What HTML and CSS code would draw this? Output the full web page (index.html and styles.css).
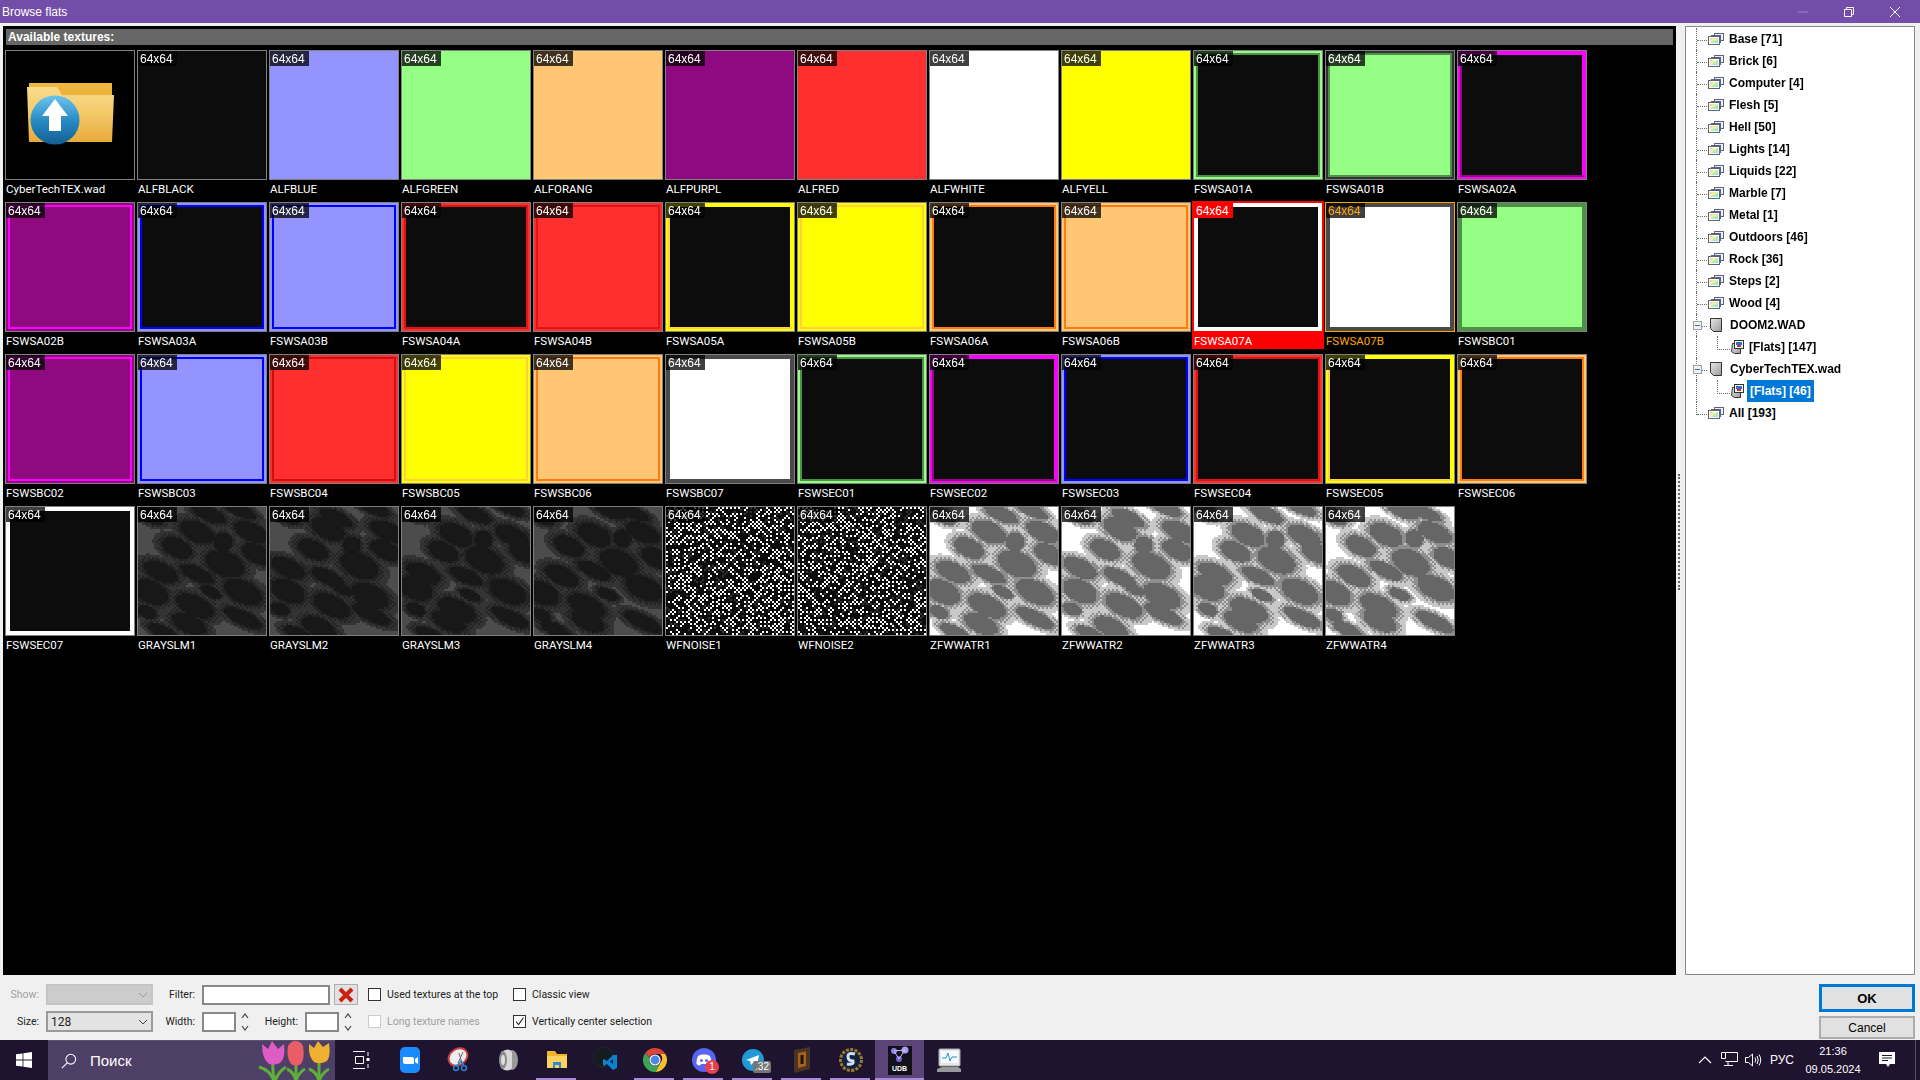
FILE: index.html
```html
<!DOCTYPE html>
<html lang="en">
<head>
    <meta charset="UTF-8">
    <title>Browse flats</title>
    <link rel="stylesheet" href="styles.css">
</head>
<body>

    <svg class="defs" width="0" height="0">
        <defs>
            <linearGradient id="pastel" x1="0" y1="0" x2="1" y2="1">
                <stop offset="0" stop-color="#ffb0b0"/>
                <stop offset="0.35" stop-color="#fff2a0"/>
                <stop offset="0.65" stop-color="#a8f0b0"/>
                <stop offset="1" stop-color="#9fd0ff"/>
            </linearGradient>
            <linearGradient id="page" x1="0" y1="0" x2="1" y2="1">
                <stop offset="0" stop-color="#e8e8e8"/>
                <stop offset="1" stop-color="#9a9a9a"/>
            </linearGradient>
            <linearGradient id="folderFront" x1="0" y1="0" x2="0" y2="1">
                <stop offset="0" stop-color="#f8dc8c"/>
                <stop offset="0.5" stop-color="#f3c968"/>
                <stop offset="1" stop-color="#e9a93a"/>
            </linearGradient>
            <linearGradient id="folderBack" x1="0" y1="0" x2="0" y2="1">
                <stop offset="0" stop-color="#f0b840"/>
                <stop offset="1" stop-color="#d99a20"/>
            </linearGradient>
            <linearGradient id="orb" x1="0" y1="0" x2="0" y2="1">
                <stop offset="0" stop-color="#6cc4ee"/>
                <stop offset="0.5" stop-color="#2a8cc4"/>
                <stop offset="1" stop-color="#125f94"/>
            </linearGradient>
            <symbol id="ico-stack" viewBox="0 0 16 12">
                <rect x="6.5" y="0.5" width="9" height="7" fill="#eef2f8" stroke="#59647c"/>
                <rect x="3.5" y="2.5" width="9" height="7" fill="#eef2f8" stroke="#59647c"/>
                <rect x="0.5" y="3.5" width="11" height="8" fill="#fff" stroke="#59647c"/>
                <rect x="2" y="5" width="8" height="5" fill="url(#pastel)"/>
            </symbol>
            <symbol id="ico-doc" viewBox="0 0 12 15">
                <path d="M3.5 .5h8v13h-8l-3-3v-10z" fill="url(#page)" stroke="#333"/>
            </symbol>
            <symbol id="ico-flat" viewBox="0 0 15 15">
                <path d="M3.5 3.5h8v10h-6l-3-2z" fill="url(#page)" stroke="#333"/>
                <rect x="5.5" y="0.5" width="9" height="8" fill="#fff" stroke="#333"/>
                <rect x="7" y="2" width="6" height="3" fill="#2f6fd0"/>
                <rect x="8" y="5" width="4" height="2" fill="#d03030"/>
            </symbol>
            <symbol id="ico-chev" viewBox="0 0 10 6">
                <path d="M1 1l4 4 4-4" fill="none" stroke="currentColor"/>
            </symbol>
            <symbol id="ico-up" viewBox="0 0 8 6">
                <path d="M1 5l3-4 3 4" fill="none" stroke="#444" stroke-width="1.2"/>
            </symbol>
            <symbol id="ico-down" viewBox="0 0 8 6">
                <path d="M1 1l3 4 3-4" fill="none" stroke="#444" stroke-width="1.2"/>
            </symbol>
            <symbol id="ico-folder" viewBox="0 0 88 62">
                <path d="M3 0h83v56H3z" fill="url(#folderBack)"/>
                <path d="M1 4h30l5 8h52l-2 47H3z" fill="url(#folderFront)"/>
                <circle cx="29" cy="37" r="24.5" fill="url(#orb)"/>
                <path d="M29 16l13 17h-7v15H23V33h-7z" fill="#fff"/>
            </symbol>
        </defs>
    </svg>

    <header class="titlebar">
        <span class="title-text">Browse flats</span>
        <div class="caption">
            <span class="caption-btn">
                <svg width="10" height="10" viewBox="0 0 10 10"><path d="M0 5h10" stroke="#9d83c7"/></svg>
            </span>
            <span class="caption-btn">
                <svg width="10" height="10" viewBox="0 0 10 10"><path d="M.5 2.5h7v7h-7zM2.5 2.5v-2h7v7h-2" fill="none" stroke="#fff"/></svg>
            </span>
            <span class="caption-btn">
                <svg width="10" height="10" viewBox="0 0 10 10"><path d="M0 0l10 10M10 0L0 10" stroke="#fff"/></svg>
            </span>
        </div>
    </header>

    <div class="window">
        <div class="panes">
            <section class="browser">
                <div class="browser-head">Available textures:</div>
                <div class="tiles" id="tiles"></div>
            </section>

            <div class="splitter"><span class="grip"></span></div>

            <nav class="tree">
                <div class="node"><svg class="i-stack"><use href="#ico-stack"/></svg><span class="node-text">Base [71]</span></div>
                <div class="node"><svg class="i-stack"><use href="#ico-stack"/></svg><span class="node-text">Brick [6]</span></div>
                <div class="node"><svg class="i-stack"><use href="#ico-stack"/></svg><span class="node-text">Computer [4]</span></div>
                <div class="node"><svg class="i-stack"><use href="#ico-stack"/></svg><span class="node-text">Flesh [5]</span></div>
                <div class="node"><svg class="i-stack"><use href="#ico-stack"/></svg><span class="node-text">Hell [50]</span></div>
                <div class="node"><svg class="i-stack"><use href="#ico-stack"/></svg><span class="node-text">Lights [14]</span></div>
                <div class="node"><svg class="i-stack"><use href="#ico-stack"/></svg><span class="node-text">Liquids [22]</span></div>
                <div class="node"><svg class="i-stack"><use href="#ico-stack"/></svg><span class="node-text">Marble [7]</span></div>
                <div class="node"><svg class="i-stack"><use href="#ico-stack"/></svg><span class="node-text">Metal [1]</span></div>
                <div class="node"><svg class="i-stack"><use href="#ico-stack"/></svg><span class="node-text">Outdoors [46]</span></div>
                <div class="node"><svg class="i-stack"><use href="#ico-stack"/></svg><span class="node-text">Rock [36]</span></div>
                <div class="node"><svg class="i-stack"><use href="#ico-stack"/></svg><span class="node-text">Steps [2]</span></div>
                <div class="node"><svg class="i-stack"><use href="#ico-stack"/></svg><span class="node-text">Wood [4]</span></div>
                <div class="node node-wad"><span class="expander"></span><svg class="i-doc"><use href="#ico-doc"/></svg><span class="node-text">DOOM2.WAD</span></div>
                <div class="node node-child"><svg class="i-flat"><use href="#ico-flat"/></svg><span class="node-text">[Flats] [147]</span></div>
                <div class="node node-wad"><span class="expander"></span><svg class="i-doc"><use href="#ico-doc"/></svg><span class="node-text">CyberTechTEX.wad</span></div>
                <div class="node node-child"><svg class="i-flat"><use href="#ico-flat"/></svg><span class="node-text node-selected">[Flats] [46]</span></div>
                <div class="node node-last"><svg class="i-stack"><use href="#ico-stack"/></svg><span class="node-text">All [193]</span></div>
            </nav>
        </div>

        <footer class="bottom">
            <div class="controls">
                <span class="lbl lbl-off">Show:</span>
                <div class="combo combo-off"><svg class="chev"><use href="#ico-chev"/></svg></div>
                <span class="lbl">Filter:</span>
                <div class="inline-row">
                    <input class="field field-filter" type="text">
                    <span class="clear-btn">
                        <svg width="16" height="16" viewBox="0 0 16 16"><path d="M2 2l12 12M14 2L2 14" stroke="#c9230f" stroke-width="4"/></svg>
                    </span>
                </div>
                <label class="check"><span class="box"></span>Used textures at the top</label>
                <label class="check"><span class="box"></span>Classic view</label>

                <span class="lbl">Size:</span>
                <div class="combo">128<svg class="chev"><use href="#ico-chev"/></svg></div>
                <span class="lbl">Width:</span>
                <div class="inline-row">
                    <input class="field field-num" type="text">
                    <span class="spin"><svg><use href="#ico-up"/></svg><svg><use href="#ico-down"/></svg></span>
                    <span class="lbl lbl-height">Height:</span>
                    <input class="field field-num" type="text">
                    <span class="spin"><svg><use href="#ico-up"/></svg><svg><use href="#ico-down"/></svg></span>
                </div>
                <label class="check check-off"><span class="box"></span>Long texture names</label>
                <label class="check">
                    <span class="box">
                        <svg width="11" height="11" viewBox="0 0 11 11"><path d="M2 5.5l2.5 3L9.5 1.5" fill="none" stroke="#222" stroke-width="1.1"/></svg>
                    </span>Vertically center selection
                </label>
            </div>
            <div class="actions">
                <button class="btn btn-ok" type="button">OK</button>
                <button class="btn btn-cancel" type="button">Cancel</button>
            </div>
        </footer>
    </div>

    <div class="taskbar">
        <div class="start">
            <svg width="16" height="16" viewBox="0 0 16 16"><path d="M0 2.3l6.6-.9v6.2H0zM7.4 1.3L16 0v7.6H7.4zM0 8.4h6.6v6.2L0 13.7zM7.4 8.4H16V16l-8.6-1.2z" fill="#fff"/></svg>
        </div>
        <div class="search">
            <svg width="16" height="16" viewBox="0 0 18 18"><circle cx="11" cy="7" r="5.5" fill="none" stroke="#fff" stroke-width="1.2"/><path d="M7 11l-6 6" stroke="#fff" stroke-width="1.2"/></svg>
            <span class="search-text">Поиск</span>
            <svg class="tulips" width="76" height="40" viewBox="0 0 76 40">
                <g fill="none" stroke="#5fae3a" stroke-width="3">
                    <path d="M16 20q-1 12 2 20M2 26q11 3 15 14M29 26q-8 5-11 14"/>
                    <path d="M39 22v18M30 28q7 3 9 12M48 28q-7 4-9 12"/>
                    <path d="M62 20v20M52 28q8 3 10 12M72 28q-7 4-10 12"/>
                </g>
                <path d="M5 3l6 5 4-8 6 8 6-5q2 14-4 19-6 3-11 1Q5 18 5 3z" fill="#de5cc4"/>
                <path d="M31 5q3-5 7-5 6 0 8 5 2 12-2 18-5 3-10 0-5-7-3-18z" fill="#ec5c66"/>
                <path d="M52 3l5 4 4-7 5 6 6-4q2 13-2 18-7 4-13 1-6-6-5-18z" fill="#eeb030"/>
            </svg>
        </div>
        <div class="apps">
            <span class="app">
                <svg width="18" height="18" viewBox="0 0 18 18"><path d="M1 .5h12M1 17.5h12M3.5 5.5h8v7h-8zM16 1v4M16 13v4" fill="none" stroke="#fff"/><rect x="14.5" y="7" width="3" height="3" fill="#fff"/></svg>
            </span>
            <span class="app">
                <svg width="20" height="26" viewBox="0 0 20 26"><rect width="20" height="26" rx="5" fill="#1a8cff"/><path d="M3 10h9q2 0 2 2v5H5q-2 0-2-2zM15 12l3-2v7l-3-2z" fill="#fff"/></svg>
            </span>
            <span class="app">
                <svg width="24" height="26" viewBox="0 0 24 26"><ellipse cx="11" cy="10" rx="10" ry="8" transform="rotate(-35 11 10)" fill="#eee" stroke="#c94040" stroke-width="2"/><path d="M12 6l3 10M16 5l-5 11" stroke="#666"/><circle cx="9" cy="21" r="2.5" fill="none" stroke="#2a80d0" stroke-width="1.5"/><circle cx="17" cy="21" r="2.5" fill="none" stroke="#2a80d0" stroke-width="1.5"/><path d="M10 19l4-5 3 5" fill="none" stroke="#2a80d0" stroke-width="1.5"/></svg>
            </span>
            <span class="app">
                <svg width="20" height="26" viewBox="0 0 20 26"><ellipse cx="14" cy="13" rx="6" ry="10" fill="#9a9a9a"/><path d="M3 5q8-5 11 0v16q-4 5-11 0z" fill="#d8d8d8"/><ellipse cx="5" cy="13" rx="4" ry="9" fill="#8c8c8c"/><ellipse cx="5" cy="13" rx="2" ry="5" fill="#ddd"/></svg>
            </span>
            <span class="app app-run">
                <svg width="22" height="22" viewBox="0 0 22 22"><path d="M1 2h8l2 3h10v14H1z" fill="#f2b52c"/><path d="M1 7h20v12H1z" fill="#fbd25e"/><path d="M7 19v-6h8v6h-2v-3H9v3z" fill="#2a8ad4"/></svg>
            </span>
            <span class="app">
                <svg width="26" height="28" viewBox="0 0 26 28"><circle cx="10" cy="11" r="10" fill="#141c20" stroke="#20282c"/><path d="M24 9v13l-4 2-6-6-3 2-1-1v-5l1-1 3 2 6-6zM20 13l-3 2.5 3 2.5z" fill="#0b83d4"/></svg>
            </span>
            <span class="app app-run">
                <svg width="24" height="24" viewBox="0 0 24 24"><path d="M12 0a12 12 0 0 1 10.4 6H12a6 6 0 0 0-5.6 3.8L2.3 5A12 12 0 0 1 12 0z" fill="#db4437"/><path d="M22.4 6A12 12 0 0 1 12.5 24l4.7-9a6 6 0 0 0 0-9z" fill="#fbc02d"/><path d="M2.3 5a12 12 0 0 0 10.2 19l4.7-9a6 6 0 0 1-10.800-5z" fill="#3aa655"/><circle cx="12" cy="12" r="5.6" fill="#fff"/><circle cx="12" cy="12" r="4.4" fill="#4a86e8"/></svg>
            </span>
            <span class="app app-run">
                <svg width="24" height="24" viewBox="0 0 24 24"><circle cx="12" cy="12" r="12" fill="#5865f2"/><path d="M6 8q3-2 4-1.5h4Q15 6 18 8q2 4 1.500 8-2 1.500-3.500 1.500l-1-1.500h-6l-1 1.500Q6.500 17.500 4.500 16 4 12 6 8z" fill="#fff"/><circle cx="9.5" cy="12.5" r="1.5" fill="#5865f2"/><circle cx="14.5" cy="12.5" r="1.5" fill="#5865f2"/></svg>
                <span class="badge badge-red">1</span>
            </span>
            <span class="app app-run">
                <svg width="24" height="24" viewBox="0 0 24 24"><circle cx="12" cy="12" r="11" fill="#1f9ad6"/><path d="M5 12l13-5-2 11-4-3-2 2-1-4z" fill="#fff"/></svg>
                <span class="badge badge-gray">.32</span>
            </span>
            <span class="app app-run">
                <svg width="20" height="28" viewBox="0 0 20 28"><path d="M2 4l16-3v22L2 27z" fill="#4a3524"/><path d="M6 7l8-1.5V20l-8 2z" fill="#a8601c"/><path d="M8.5 9h3v9h-3z" fill="#1e150d"/></svg>
            </span>
            <span class="app app-run">
                <svg width="24" height="26" viewBox="0 0 24 26"><circle cx="12" cy="13" r="10.5" fill="#15233a" stroke="#9a7a30" stroke-width="3" stroke-dasharray="3 1.4"/><path d="M16 7q-7-2-7 2.5t5 4.5q1 4-6 3" fill="none" stroke="#cfe0f4" stroke-width="3"/></svg>
            </span>
            <span class="app app-active">
                <span class="udb">
                    <svg width="24" height="18" viewBox="0 0 24 18"><circle cx="6" cy="5" r="3" fill="#8a7cf0"/><circle cx="17" cy="4" r="3.5" fill="#a99cf6"/><circle cx="11" cy="13" r="3" fill="#6f60d8"/><path d="M6 5l11-1-6 9z" fill="none" stroke="#c8c0ff"/></svg>
                    <span class="udb-text">UDB</span>
                </span>
            </span>
            <span class="app">
                <svg width="26" height="26" viewBox="0 0 26 26"><path d="M1 22l5-2h16l3 2v3H1z" fill="#999"/><rect x="3" y="2" width="21" height="17" rx="1" fill="#e6e6e6" stroke="#aaa"/><rect x="5" y="4" width="17" height="12" fill="#f6fbff"/><path d="M6 11h4l2-5 2 8 2-4h5" fill="none" stroke="#2e8fc9"/></svg>
            </span>
        </div>

        <div class="tray">
            <svg width="14" height="8" viewBox="0 0 14 8"><path d="M1 7l6-6 6 6" fill="none" stroke="#fff" stroke-width="1.2"/></svg>
            <svg class="tray-net" width="17" height="16" viewBox="0 0 17 16"><path d="M4.5.5h12v9h-12M7 9.5V13M3 13.5h9M.5.5h4v6h-4z" fill="none" stroke="#fff"/></svg>
            <svg class="tray-vol" width="17" height="14" viewBox="0 0 17 14"><path d="M.5 4.5h3l4-3.500v12l-4-3.500h-3z" fill="none" stroke="#fff"/><path d="M10 4.5q1.500 2.500 0 5M12 3q2.500 4 0 8M14 1.500q3.500 5.500 0 11" fill="none" stroke="#fff"/></svg>
            <span class="tray-lang">РУС</span>
            <span class="clock"><span>21:36</span><span>09.05.2024</span></span>
            <svg class="tray-msg" width="16" height="16" viewBox="0 0 16 16"><path d="M0 0h16v12h-5l-2 3-2-3H0z" fill="#fff"/><path d="M3 3.5h10M3 6h10M3 8.5h6" stroke="#1f1430"/></svg>
            <span class="show-desktop"></span>
        </div>
    </div>

    <script src="script.js"></script>
</body>
</html>
```

FILE: styles.css
```css
* { box-sizing: border-box; }
html, body { margin: 0; height: 100%; }
body { display: flex; flex-direction: column; height: 1080px; overflow: hidden; background: #f0f0f0; font-family: "Liberation Sans", Arial, sans-serif; font-size: 12px; color: #000; }
.defs { position: absolute; }

/* title bar */
.titlebar { display: flex; align-items: center; justify-content: space-between; height: 23px; flex: none; padding-left: 2px; background: #744da9; color: #fff; }
.caption { display: flex; margin-right: 2px; }
.caption-btn { display: flex; width: 46px; height: 23px; align-items: center; justify-content: center; }

/* main window */
.window { display: flex; flex-direction: column; flex: 1; min-height: 0; }
.panes { display: flex; flex: 1; min-height: 0; padding: 3px 5px 0 3px; }
.browser { flex: 1; min-width: 0; padding-top: 3px; background: #000; color: #fff; }
.browser-head { height: 16px; margin: 0 3px; padding-left: 2px; line-height: 17px; background: #666; font-weight: bold; }
.tiles { display: grid; grid-template-columns: repeat(12, 132px); row-gap: 4px; padding: 4px 0 0 1px; }
.tile { height: 148px; padding: 1px; }
.thumb { position: relative; width: 130px; height: 130px; border: 1px solid #808080; background: #000; }
.thumb canvas { display: block; width: 128px; height: 128px; image-rendering: pixelated; }
.thumb-folder { display: flex; align-items: center; justify-content: center; padding-bottom: 2px; }
.dims { position: absolute; top: 0; left: 0; width: 39px; height: 15px; padding-left: 2px; line-height: 16px; background: rgba(0, 0, 0, 0.75); }
.tile-name { height: 17px; padding-left: 1px; font-family: Roboto, "Liberation Sans", sans-serif; font-size: 11.5px; line-height: 18px; white-space: nowrap; }
.tile-selected { background: #f00; }
.tile-selected .thumb { border-color: #f00; }
.tile-selected .dims { background: #f00; }
.tile-hover .thumb { border-color: #ffa500; }
.tile-hover .dims, .tile-hover .tile-name { color: #ffa500; }

.splitter { display: flex; flex: none; width: 9px; align-items: center; padding-left: 2px; }
.grip { width: 2px; height: 116px; margin-top: 62px; border-left: 2px dotted #666; }

/* tree */
.tree { flex: none; width: 230px; padding-top: 1px; background: #fff; border: 1px solid #828790; }
.node { position: relative; display: flex; height: 22px; align-items: center; padding-left: 22px; font-weight: bold; }
.node::before { content: ""; position: absolute; left: 10px; top: 0; bottom: 0; border-left: 1px dotted #666; }
.node::after { content: ""; position: absolute; left: 11px; top: 12px; width: 10px; border-top: 1px dotted #666; }
.node-last::before { bottom: 9px; }
.node-text { padding: 0 3px; line-height: 22px; white-space: nowrap; }
.i-stack { width: 16px; height: 12px; margin-right: 2px; }
.i-doc { width: 12px; height: 15px; margin: 0 5px 0 2px; }
.i-flat { width: 15px; height: 15px; margin-right: 2px; }
.node-wad { z-index: 1; }
.expander { position: absolute; left: 7px; top: 7px; z-index: 1; width: 9px; height: 9px; background: linear-gradient(#3a6ea5, #3a6ea5) center / 5px 1px no-repeat, #f2f2f2; border: 1px solid #a0a0a0; }
.node-child { padding-left: 43px; }
.node-child .i-flat { position: relative; }
.node-child::after { left: 31px; top: 0; width: 12px; height: 13px; border-top: 0; border-left: 1px dotted #666; border-bottom: 1px dotted #666; }
.node-selected { margin-left: 1px; color: #fff; background: #0078d7; }

/* bottom controls */
.bottom { display: flex; flex: none; height: 65px; justify-content: space-between; padding: 9px 5px 0 0; }
.controls { display: grid; grid-template-columns: 46px 107px 49px 166px 145px auto; grid-template-rows: 21px 21px; row-gap: 6px; align-items: center; color: #222; font-family: Roboto, "Liberation Sans", sans-serif; font-size: 10.5px; }
.lbl { justify-self: end; padding-right: 7px; }
.lbl-off { color: #a0a0a0; }
.lbl-height { width: 54px; text-align: right; }
.combo { position: relative; height: 21px; padding-left: 3px; line-height: 18px; font-size: 12px; background: #e3e3e3; border: 2px solid #9a9a9a; }
.combo-off { background: #ccc; border-color: #c4c4c4; color: #888; }
.chev { position: absolute; top: 6px; right: 3px; width: 10px; height: 6px; color: #444; }
.combo-off .chev { color: #9a9a9a; }
.inline-row { display: flex; align-items: center; }
.field { height: 20px; padding: 0; background: #fff; border: 2px solid #888; }
.field-filter { width: 128px; margin-right: 4px; }
.field-num { width: 34px; }
.clear-btn { display: flex; width: 24px; height: 21px; align-items: center; justify-content: center; background: #e1e1e1; border: 1px solid #adadad; }
.spin { display: flex; flex-direction: column; gap: 6px; width: 10px; margin-left: 5px; }
.spin svg { width: 8px; height: 6px; }
.check { display: flex; align-items: center; gap: 6px; white-space: nowrap; }
.box { display: flex; width: 13px; height: 13px; flex: none; align-items: center; justify-content: center; background: #fff; border: 1px solid #333; }
.check-off { color: #a0a0a0; }
.check-off .box { border-color: #ccc; }
.actions { display: flex; flex-direction: column; gap: 4px; width: 96px; }
.btn { padding: 0; font-family: inherit; background: #e1e1e1; cursor: pointer; }
.btn-ok { height: 28px; font-size: 13px; font-weight: bold; border: 3px solid #0078d7; }
.btn-cancel { height: 23px; font-size: 12px; border: 2px solid #adadad; }

/* taskbar */
.taskbar { display: flex; flex: none; height: 40px; background: #1f1430; color: #fff; }
.start { display: flex; width: 48px; align-items: center; justify-content: center; }
.search { position: relative; display: flex; width: 287px; align-items: center; gap: 13px; padding-left: 13px; background: #4d3f66; border-top: 1px solid #5d4f76; }
.search-text { font-size: 15px; }
.tulips { position: absolute; right: 2px; top: 0; }
.apps { display: flex; margin-left: 1px; }
.app { position: relative; display: flex; width: 49px; height: 40px; align-items: center; justify-content: center; }
.app-run::after { content: ""; position: absolute; left: 4px; right: 5px; bottom: 0; height: 2px; background: #a98ad8; }
.app-active { background: #5b4476; }
.app-active::after { content: ""; position: absolute; left: 0; right: 0; bottom: 0; height: 2px; background: #a98ad8; }
.badge { position: absolute; font-size: 10px; line-height: 14px; text-align: center; color: #fff; }
.badge-red { right: 9px; bottom: 6px; width: 14px; height: 14px; border-radius: 50%; background: #e8404a; }
.badge-gray { right: 6px; bottom: 7px; width: 18px; height: 12px; line-height: 12px; border-radius: 2px; background: #777; }
.udb { display: flex; flex-direction: column; width: 24px; height: 29px; align-items: center; background: #121018; }
.udb-text { font-size: 7px; line-height: 9px; font-weight: bold; }
.tray { display: flex; align-items: center; margin-left: auto; }
.tray-net { margin-left: 9px; }
.tray-vol { margin-left: 7px; }
.tray-lang { margin-left: 8px; width: 24px; }
.clock { display: flex; flex-direction: column; align-items: center; gap: 5px; width: 56px; margin-left: 11px; font-size: 11px; line-height: 13px; }
.tray-msg { margin: 0 20px 0 18px; }
.show-desktop { align-self: stretch; width: 5px; border-left: 1px solid #554a66; }
```

FILE: script.js
```js
// --- Texture data: name, fill, outer ring, inner ring top/right, inner ring bottom/left ---
const K = '#0c0c0c', B = '#9494ff', G = '#94ff84', O = '#ffc773', P = '#8f0a80', R = '#ff2f2f', W = '#ffffff', Y = '#ffff00';
const DG = '#4f8f47', MG = '#ff00ff', BL = '#0000ff', DR = '#dd1515', GD = '#ffd040', OR = '#ff7a10', GR = '#4a4a4a';

const flats = [
    ['ALFBLACK', K], ['ALFBLUE', B], ['ALFGREEN', G], ['ALFORANG', O], ['ALFPURPL', P], ['ALFRED', R], ['ALFWHITE', W], ['ALFYELL', Y],
    ['FSWSA01A', K, G, DG, DG], ['FSWSA01B', G, '#333333', DG, DG], ['FSWSA02A', K, MG, MG, P],
    ['FSWSA02B', P, P, MG, MG], ['FSWSA03A', K, B, BL, BL], ['FSWSA03B', B, B, BL, BL], ['FSWSA04A', K, R, DR, DR], ['FSWSA04B', R, R, DR, DR],
    ['FSWSA05A', K, Y, Y, GD], ['FSWSA05B', Y, Y, GD, GD], ['FSWSA06A', K, O, OR, OR], ['FSWSA06B', O, O, OR, OR],
    ['FSWSA07A', K, W, W, W], ['FSWSA07B', W, GR, GR, GR], ['FSWSBC01', G, DG, DG, DG],
    ['FSWSBC02', P, P, MG, MG], ['FSWSBC03', B, B, BL, BL], ['FSWSBC04', R, R, '#cc1010', '#cc1010'], ['FSWSBC05', Y, Y, GD, GD], ['FSWSBC06', O, O, OR, OR], ['FSWSBC07', W, GR, GR, GR],
    ['FSWSEC01', K, G, DG, DG], ['FSWSEC02', K, MG, MG, P], ['FSWSEC03', K, B, BL, BL], ['FSWSEC04', K, R, DR, DR], ['FSWSEC05', K, Y, Y, GD], ['FSWSEC06', K, O, OR, OR],
    ['FSWSEC07', K, W, W, W],
    ['GRAYSLM1', 'slime', 0], ['GRAYSLM2', 'slime', 1], ['GRAYSLM3', 'slime', 2], ['GRAYSLM4', 'slime', 3],
    ['WFNOISE1', 'noise', 7], ['WFNOISE2', 'noise', 23],
    ['ZFWWATR1', 'water', 0], ['ZFWWATR2', 'water', 1], ['ZFWWATR3', 'water', 2], ['ZFWWATR4', 'water', 3]
];

// Cells of the liquid textures, in texels: x, y, radius x, radius y
const cells = [
    [6, 4, 7, 3.5], [29, 12, 9, 5], [35, 3, 9, 3.5], [50, 1, 9, 3], [56, 12, 9, 4.5], [42, 17, 4.5, 4.5], [59, 23, 8, 4.5],
    [19, 20, 8, 4.5], [43, 28, 10, 6], [11, 32, 9, 4.5], [29, 33, 9, 3.5], [6, 42, 9, 5.5], [36, 42, 5.5, 2.5], [52, 42, 10, 5.5],
    [4, 52, 5, 3], [28, 49, 10, 5], [25, 58, 9, 4.5], [52, 55, 10, 3.5], [12, 62, 8, 3]
];

function drawRing(ctx, outer, top, bottom) {
    ctx.fillStyle = outer;
    ctx.fillRect(0, 0, 64, 64);
    ctx.fillStyle = top;
    ctx.fillRect(1, 1, 62, 62);
    ctx.fillStyle = bottom;
    ctx.fillRect(1, 2, 1, 61);
    ctx.fillRect(1, 62, 62, 1);
}

function drawFlat(ctx, fill, outer, top, bottom) {
    if (outer) {
        drawRing(ctx, outer, top, bottom);
        ctx.fillStyle = fill;
        ctx.fillRect(2, 2, 60, 60);
    } else {
        ctx.fillStyle = fill;
        ctx.fillRect(0, 0, 64, 64);
    }
}

function drawNoise(ctx, seed) {
    let s = seed * 7919 + 1;
    const next = () => {
        s = (s * 1103515245 + 12345) & 0x7fffffff;
        return (s >> 8) % 1000 / 1000;
    };
    for (let y = 0; y < 64; y++) {
        for (let x = 0; x < 64; x++) {
            const r = next();
            ctx.fillStyle = K;
            if ((x + y) % 2 === 0 && r < 0.46) ctx.fillStyle = W;
            else if ((x + y) % 2 === 0 && r > 0.86) ctx.fillStyle = '#333333';
            ctx.fillRect(x, y, 1, 1);
        }
    }
}

function drawCells(ctx, frame, dark, mid, soft, light) {
    const angle = 25 * Math.PI / 180;
    const cos = Math.cos(angle), sin = Math.sin(angle);
    const moved = cells.map((c, i) => [
        c[0] + (frame ? Math.sin(i * 1.7 + frame * 1.6) * 2.5 : 0),
        c[1] + (frame ? Math.cos(i * 2.3 + frame * 1.6) * 2 : 0),
        c[2], c[3]
    ]);
    for (let y = 0; y < 64; y++) {
        for (let x = 0; x < 64; x++) {
            let d = 99;
            for (const c of moved) {
                const dx = x - c[0], dy = y - c[1];
                const u = (dx * cos + dy * sin) / c[2];
                const v = (dy * cos - dx * sin) / c[3];
                d = Math.min(d, Math.sqrt(u * u + v * v));
            }
            let color = light;
            if (d < 1) color = dark;
            else if (d < 1.16) color = mid;
            else if (d < 1.36) color = (x + y) % 2 === 0 ? mid : soft;
            else if (d < 1.62) color = soft;
            ctx.fillStyle = color;
            ctx.fillRect(x, y, 1, 1);
        }
    }
}

function buildTile(name, selected, hover) {
    const tile = document.createElement('div');
    tile.className = 'tile' + (selected ? ' tile-selected' : '') + (hover ? ' tile-hover' : '');
    const thumb = document.createElement('div');
    thumb.className = 'thumb';
    const label = document.createElement('div');
    label.className = 'tile-name';
    label.textContent = name;
    tile.append(thumb, label);
    return { tile, thumb };
}

// --- Build the grid ---
const grid = document.getElementById('tiles');

const up = buildTile('CyberTechTEX.wad');
up.thumb.classList.add('thumb-folder');
up.thumb.innerHTML = '<svg width="88" height="62"><use href="#ico-folder"/></svg>';
grid.append(up.tile);

for (const [name, fill, a, b, c] of flats) {
    const { tile, thumb } = buildTile(name, name === 'FSWSA07A', name === 'FSWSA07B');
    const canvas = document.createElement('canvas');
    canvas.width = 64;
    canvas.height = 64;
    const ctx = canvas.getContext('2d');
    if (fill === 'noise') drawNoise(ctx, a);
    else if (fill === 'water') drawCells(ctx, a, '#666666', '#8e8e8e', '#c8c8c8', '#ffffff');
    else if (fill === 'slime') drawCells(ctx, a, '#181818', '#242424', '#333333', '#4c4c4c');
    else drawFlat(ctx, fill, a, b, c);
    const dims = document.createElement('span');
    dims.className = 'dims';
    dims.textContent = '64x64';
    thumb.append(canvas, dims);
    grid.append(tile);
}
```
